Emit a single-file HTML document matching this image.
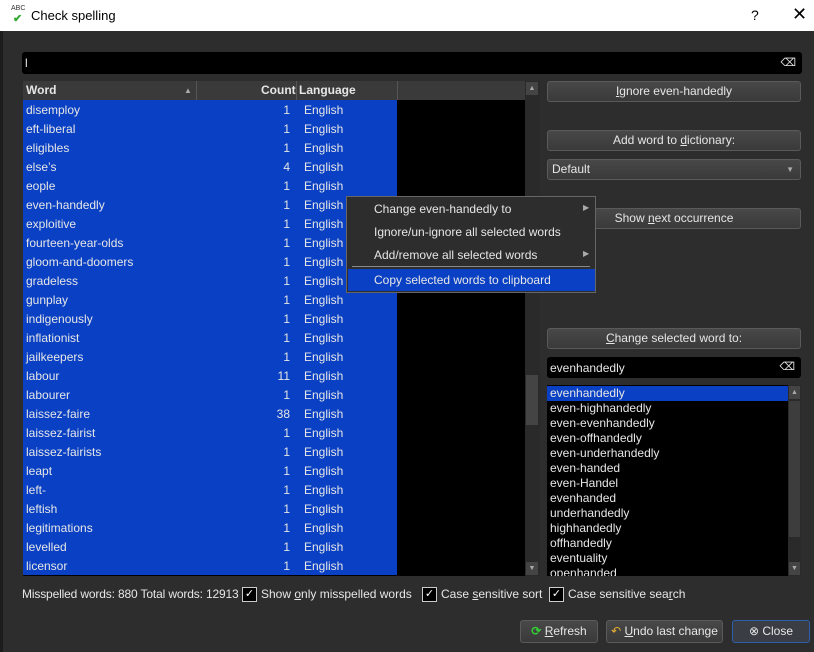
<html><head><style>
body{margin:0;width:814px;height:652px;background:#2d2d2d;font-family:"Liberation Sans",sans-serif;font-size:12px;color:#e6e6e6;position:relative;overflow:hidden}
.a{position:absolute}
.btn{position:absolute;background:linear-gradient(#484848,#3a3a3a);border:1px solid #5a5a5a;border-radius:3px;text-align:center;line-height:19px;color:#e6e6e6;box-sizing:border-box}
.row{height:19px;line-height:19px;position:relative}
.row span{position:absolute;top:1px}
u{text-decoration:underline}
.cb{position:absolute;width:13px;height:13px;border:1px solid #ccc;background:#000;text-align:center;line-height:13px;font-size:11px;color:#fff;top:0}
</style></head><body>
<div class="a" style="left:0;top:0;width:814px;height:31px;background:#fff;color:#000;font-size:13px">
<span class="a" style="left:11px;top:5px;font-size:7px;color:#333">ABC</span><span class="a" style="left:13px;top:12px;color:#3a3;font-size:11px;font-weight:bold">✔</span>
<span class="a" style="left:31px;top:8px">Check spelling</span>
<span class="a" style="left:751px;top:7px;font-size:14px">?</span>
<span class="a" style="left:792px;top:4px;font-size:18px">✕</span></div>
<div class="a" style="left:0;top:31px;width:3px;height:621px;background:#1c1c1c"></div>
<div class="a" style="left:22px;top:52px;width:780px;height:22px;background:#000;border-radius:3px"><span class="a" style="left:3px;top:4px">l</span><span class="a" style="right:6px;top:4px;font-size:11px">⌫</span></div>
<div class="a" style="left:23px;top:81px;width:502px;height:495px;background:#000;overflow:hidden">
<div style="height:19px;background:#3a3a3a;font-weight:bold;line-height:19px;position:relative">
<span class="a" style="left:3px">Word</span><span class="a" style="left:161px;font-size:8px;color:#aaa">▲</span>
<span class="a" style="left:173px;width:1px;height:19px;background:#555"></span>
<span class="a" style="left:238px">Count</span><span class="a" style="left:273px;width:1px;height:19px;background:#555"></span>
<span class="a" style="left:276px">Language</span><span class="a" style="left:374px;width:1px;height:19px;background:#555"></span></div>
<div style="width:374px;background:#0a41c4">
<div class="row"><span style="left:3px">disemploy</span><span style="right:107px">1</span><span style="left:281px">English</span></div>
<div class="row"><span style="left:3px">eft-liberal</span><span style="right:107px">1</span><span style="left:281px">English</span></div>
<div class="row"><span style="left:3px">eligibles</span><span style="right:107px">1</span><span style="left:281px">English</span></div>
<div class="row"><span style="left:3px">else’s</span><span style="right:107px">4</span><span style="left:281px">English</span></div>
<div class="row"><span style="left:3px">eople</span><span style="right:107px">1</span><span style="left:281px">English</span></div>
<div class="row"><span style="left:3px">even-handedly</span><span style="right:107px">1</span><span style="left:281px">English</span></div>
<div class="row"><span style="left:3px">exploitive</span><span style="right:107px">1</span><span style="left:281px">English</span></div>
<div class="row"><span style="left:3px">fourteen-year-olds</span><span style="right:107px">1</span><span style="left:281px">English</span></div>
<div class="row"><span style="left:3px">gloom-and-doomers</span><span style="right:107px">1</span><span style="left:281px">English</span></div>
<div class="row"><span style="left:3px">gradeless</span><span style="right:107px">1</span><span style="left:281px">English</span></div>
<div class="row"><span style="left:3px">gunplay</span><span style="right:107px">1</span><span style="left:281px">English</span></div>
<div class="row"><span style="left:3px">indigenously</span><span style="right:107px">1</span><span style="left:281px">English</span></div>
<div class="row"><span style="left:3px">inflationist</span><span style="right:107px">1</span><span style="left:281px">English</span></div>
<div class="row"><span style="left:3px">jailkeepers</span><span style="right:107px">1</span><span style="left:281px">English</span></div>
<div class="row"><span style="left:3px">labour</span><span style="right:107px">11</span><span style="left:281px">English</span></div>
<div class="row"><span style="left:3px">labourer</span><span style="right:107px">1</span><span style="left:281px">English</span></div>
<div class="row"><span style="left:3px">laissez-faire</span><span style="right:107px">38</span><span style="left:281px">English</span></div>
<div class="row"><span style="left:3px">laissez-fairist</span><span style="right:107px">1</span><span style="left:281px">English</span></div>
<div class="row"><span style="left:3px">laissez-fairists</span><span style="right:107px">1</span><span style="left:281px">English</span></div>
<div class="row"><span style="left:3px">leapt</span><span style="right:107px">1</span><span style="left:281px">English</span></div>
<div class="row"><span style="left:3px">left-</span><span style="right:107px">1</span><span style="left:281px">English</span></div>
<div class="row"><span style="left:3px">leftish</span><span style="right:107px">1</span><span style="left:281px">English</span></div>
<div class="row"><span style="left:3px">legitimations</span><span style="right:107px">1</span><span style="left:281px">English</span></div>
<div class="row"><span style="left:3px">levelled</span><span style="right:107px">1</span><span style="left:281px">English</span></div>
<div class="row"><span style="left:3px">licensor</span><span style="right:107px">1</span><span style="left:281px">English</span></div>
</div></div>
<div class="a" style="left:525px;top:81px;width:15px;height:495px;background:#2a2a2a">
<div class="a" style="left:1px;top:1px;width:12px;height:13px;background:#444;font-size:7px;text-align:center;line-height:13px;color:#aaa">▲</div>
<div class="a" style="left:1px;top:294px;width:12px;height:50px;background:#444"></div>
<div class="a" style="left:1px;top:481px;width:12px;height:13px;background:#444;font-size:7px;text-align:center;line-height:13px;color:#aaa">▼</div></div>
<div class="btn" style="left:547px;top:81px;width:254px;height:21px"><u>I</u>gnore even-handedly</div>
<div class="btn" style="left:547px;top:130px;width:254px;height:21px">Add word to <u>d</u>ictionary:</div>
<div class="btn" style="left:547px;top:159px;width:254px;height:21px;text-align:left;padding-left:4px">Default<span class="a" style="right:6px;font-size:8px;color:#aaa">▼</span></div>
<div class="btn" style="left:547px;top:208px;width:254px;height:21px">Show <u>n</u>ext occurrence</div>
<div class="btn" style="left:547px;top:328px;width:254px;height:21px"><u>C</u>hange selected word to:</div>
<div class="a" style="left:547px;top:357px;width:254px;height:21px;background:#000;border-radius:3px"><span class="a" style="left:3px;top:4px">evenhandedly</span><span class="a" style="right:6px;top:3px;font-size:11px">⌫</span></div>
<div class="a" style="left:547px;top:385px;width:254px;height:191px;background:#000;overflow:hidden;line-height:15px">
<div style="background:#0a41c4;width:240px;padding-left:3px;margin-top:1px">evenhandedly</div>
<div style="padding-left:3px">even-highhandedly<br>even-evenhandedly<br>even-offhandedly<br>even-underhandedly<br>even-handed<br>even-Handel<br>evenhanded<br>underhandedly<br>highhandedly<br>offhandedly<br>eventuality<br>openhanded</div>
<div class="a" style="left:241px;top:0;width:13px;height:191px;background:#2a2a2a"><div class="a" style="left:1px;top:1px;width:11px;height:13px;background:#444;font-size:7px;text-align:center;line-height:13px;color:#aaa">▲</div><div class="a" style="left:1px;top:16px;width:11px;height:136px;background:#3d3d3d"></div><div class="a" style="left:1px;top:177px;width:11px;height:13px;background:#444;font-size:7px;text-align:center;line-height:13px;color:#aaa">▼</div></div></div>
<div class="a" style="left:0;top:587px;width:814px;height:15px;white-space:nowrap">
<span class="a" style="left:22px;top:0;letter-spacing:-0.15px">Misspelled words: 880 Total words: 12913</span>
<span class="cb" style="left:242px">✓</span><span class="a" style="left:261px;top:0">Show <u>o</u>nly misspelled words</span>
<span class="cb" style="left:422px">✓</span><span class="a" style="left:441px;top:0">Case <u>s</u>ensitive sort</span>
<span class="cb" style="left:549px">✓</span><span class="a" style="left:568px;top:0">Case sensitive sea<u>r</u>ch</span></div>
<div class="btn" style="left:520px;top:620px;width:78px;height:23px;line-height:21px"><span style="color:#3c3;font-weight:bold">⟳</span> <u>R</u>efresh</div>
<div class="btn" style="left:606px;top:620px;width:117px;height:23px;line-height:21px"><span style="color:#e9b030">↶</span> <u>U</u>ndo last change</div>
<div class="btn" style="left:732px;top:620px;width:78px;height:23px;line-height:21px;border-color:#2f5fa8;background:#3a3d44">⊗ Close</div>
<div class="a" style="left:346px;top:196px;width:250px;height:97px;background:#2d2d2d;border:1px solid #666;box-sizing:border-box;font-size:12px">
<div class="a" style="left:27px;top:5px">Change even-handedly to</div><span class="a" style="left:236px;top:6px;font-size:8px;color:#aaa">▶</span>
<div class="a" style="left:27px;top:28px">Ignore/un-ignore all selected words</div>
<div class="a" style="left:27px;top:51px">Add/remove all selected words</div><span class="a" style="left:236px;top:52px;font-size:8px;color:#aaa">▶</span>
<div class="a" style="left:5px;top:69px;width:238px;height:1px;background:#888"></div>
<div class="a" style="left:1px;top:72px;width:247px;height:22px;background:#0a41c4"><span class="a" style="left:26px;top:4px">Copy selected words to clipboard</span></div></div>
</body></html>
